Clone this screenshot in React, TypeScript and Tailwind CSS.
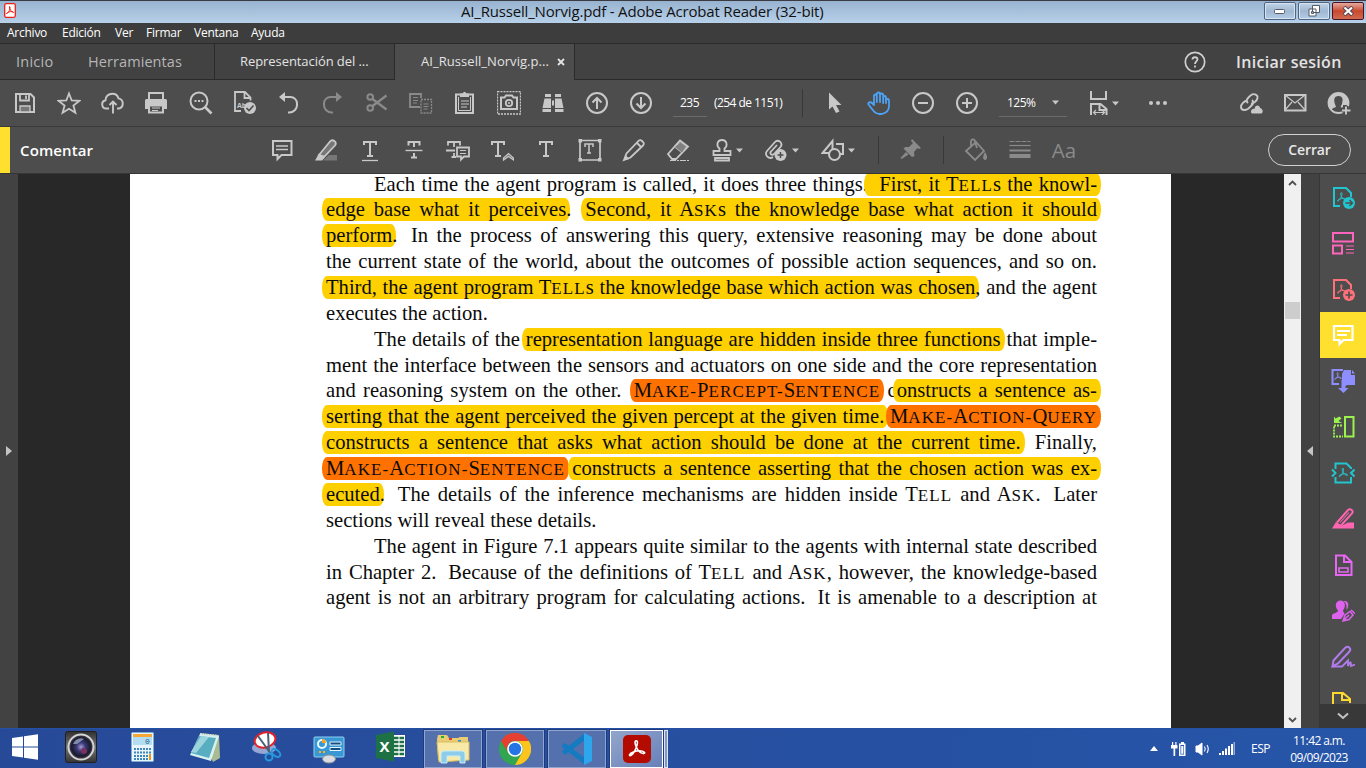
import React from "react";

type P = { children?: React.ReactNode; className?: string; w?: number; h?: number };

/* Outline icon on a 24-unit grid, one unit per pixel */
const I = ({ children, className = "text-[#c8c8c8]", w = 24, h = 24 }: P) => (
  <svg width={w} height={h} viewBox={`0 0 ${w} ${h}`} className={`shrink-0 ${className}`} fill="none" stroke="currentColor" strokeWidth={1.8}>
    {children}
  </svg>
);
const Cell = ({ children }: P) => <div className="flex w-11 shrink-0 items-center justify-center">{children}</div>;
const Caret = () => (
  <svg width="7" height="5" viewBox="0 0 7 5" className="shrink-0 fill-[#c8c8c8]"><path d="M0 .5h7L3.5 4.5z" /></svg>
);
const dim = "text-[#8a8a8a]";
const f = { fill: "currentColor", stroke: "none" };

const Tee = ({ x = 12, y = 4, s = 1 }: { x?: number; y?: number; s?: number }) => (
  <path transform={`translate(${x} ${y}) scale(${s})`} d="M-6 4V1H6V4M0 1V15M-3 15H3" strokeWidth={2} />
);
const Trefoil = ({ t = "", sw = 1.3 }: { t?: string; sw?: number }) => (
  <path transform={t} strokeWidth={sw} strokeLinejoin="round" d="M5 0.8C3.6.6 4 3 5 5C6 7 8 8.8 9.6 8.8C11 8.6 9.5 7 7 7C4.500 7 1 8.2.6 9.6C.6 11 2.700 9.500 4 7C5.200 4.500 6.300 1 5 .8" />
);

const mainIcons: React.ReactNode[] = [
  <I><path d="M3 3H17.500L21 6.500V21H3Z" strokeWidth={2} /><path d="M7 3V9.500H16V3" /><path d="M13 4.500V8" /><path d="M7 15h10v6H7z" fill="#777" strokeWidth={1.3} /></I>,
  <I><path d="M12 2.500L14.700 9.500L22.300 9.900L16.400 14.500L18.400 21.800L12 17.700L5.600 21.800L7.600 14.500L1.700 9.900L9.300 9.500Z" /></I>,
  <I><path d="M8 17.500H5.500A4.200 4.200 0 0 1 4.500 9.200C4.500 5.500 7.500 2.700 11.300 2.700C14.500 2.700 16.800 4.700 17.500 7.400A5.200 5.200 0 0 1 18 17.500H16M12 22.500V11M8.500 14L12 10.500L15.500 14" strokeWidth={1.9} /></I>,
  <I><path d="M4 8V2H18V8" strokeWidth={2} /><path {...f} d="M0 9.500Q0 8 1.500 8H20.500Q22 8 22 9.500V18H18V15H4V18H0Z" /><path d="M4 14.500H18V21.500H4Z" strokeWidth={2} /><path d="M7 17h8M7 19.500h6" strokeWidth={1} /></I>,
  <I><circle cx="10" cy="10" r="8.500" strokeWidth={2} /><path d="M16 16L22.500 22.500" strokeWidth={2.600} /><path {...f} d="M5.500 9h2v2h-2zM9 9h2v2H9zM12.500 9h2v2h-2z" /></I>,
  <I><path d="M8 20H2V1H12L17.500 6.500V9.500M11.500 1V7H17" /><text x="4" y="16.500" fontSize="7" fontFamily="Open Sans" fontWeight="bold" fill="currentColor" stroke="none">Ab</text><circle cx="17" cy="17" r="6" {...f} /><path d="M13.500 17L16 19.500L20.500 14.500" stroke="#4d4d4d" strokeWidth={1.600} /></I>,
  <I><path d="M6 6H13.500A6.500 6.500 0 0 1 20 12.500A8 8 0 0 1 11 21.500" strokeWidth={2} /><path {...f} d="M2 6L8 1V11Z" /></I>,
  <I className={dim}><path d="M17 6H9.500A6.500 6.500 0 0 0 3 12.500A8 8 0 0 0 12 21.500" strokeWidth={2} /><path {...f} d="M21 6L15 1V11Z" /></I>,
  <I className={dim}><circle cx="5.200" cy="6" r="2.800" strokeWidth={2} /><circle cx="5.200" cy="17" r="2.800" strokeWidth={2} /><path d="M7.500 8L21.500 18.500M7.500 15L21.500 4.500" strokeWidth={2.300} /></I>,
  <I className={dim}><path d="M11 16H1V3H12V7" /><path d="M4 6.500h5M4 9.500h5M4 12h4" strokeWidth={1} /><path d="M12 8.500H22.500V22H12Z" strokeDasharray="2 1" strokeWidth={1.300} /><path d="M14.500 13h5M14.500 15.500h5M14.500 18h4" strokeWidth={1} /></I>,
  <I><path d="M3 3.500H20V22H3Z" strokeWidth={2} /><path {...f} d="M7 2.500H9.500Q11.500-1 13.500 2.500H16V6H7Z" /><path d="M5.500 6V19.500H17.500V6" strokeWidth={1} /><path d="M8 10h8M8 13h8M8 16h6" strokeWidth={1.100} /></I>,
  <I><path d="M.5 .5H23.500V23H.5Z" strokeDasharray="2 1" strokeWidth={1.300} /><path d="M4 6.500H7.500L9 4.500H15L16.500 6.500H20V18H4Z" strokeWidth={2} /><circle cx="12" cy="12" r="3.200" /><circle cx="12" cy="12" r="1" {...f} /></I>,
  <I><path {...f} d="M4 3h6v3H4zM14 3h6v3h-6zM3.500 7.500H10V17H1.500ZM14 7.500H20.500L22.500 17H14ZM11 9.500h2v5h-2zM1.500 18H10v3H1.500zM14 18h8.500v3H14z" /></I>,
  <I><circle cx="12" cy="12" r="10" strokeWidth={2} /><path d="M12 18V7M7.500 11.500L12 7L16.500 11.500" strokeWidth={2} /></I>,
  <I><circle cx="12" cy="12" r="10" strokeWidth={2} /><path d="M12 6V17M7.500 12.500L12 17L16.500 12.500" strokeWidth={2} /></I>,
];

const commentIcons: React.ReactNode[] = [
  <I><path d="M3 3H21.500V17H11.500L7.500 21V17H3Z" strokeWidth={2} /><path d="M6 8h12M6 11.500h12" strokeWidth={1.300} /></I>,
  <I><path d="M9 22.500L15 17H23V22.500Z" fill="#777" stroke="none" /><path d="M5 17L16 3.500C18.500 .5 23.500 4 21 7.500L10.500 18.500Z" fill="#777" /><path {...f} d="M1 22.500L5 15.500L11 19.500L8 22.500Z" /></I>,
  <I><Tee y={3} /><path d="M4 22.500H20" strokeWidth={1.300} /></I>,
  <I><path d="M6.500 7.500V4H17.500V7.500M12 4V9M12 15V19.500M9 19.500H15" strokeWidth={2} /><path d="M3.500 12.500H20.500" strokeWidth={1.400} /></I>,
  <I><path d="M2 7.500V4H14V7.500M8 4V9M0 12.500H9M8 15V19M5.500 19H10" /><path d="M11 9.500H23V18.500H18L15 21.500V18.500H11Z" fill="#4d4d4d" /><path d="M14 12.500h6M14 15.500h6" strokeWidth={1} /></I>,
  <I><Tee x={8} y={3} /><path d="M13.500 22V20L18.500 15.500L23.500 20V22L18.500 18.500Z" fill="#777" strokeWidth={1.200} /></I>,
  <I><Tee y={3} /></I>,
  <I><path d="M2 2.500H22V22H2Z" strokeWidth={1.700} /><path {...f} d="M.5 1h3.500v3.500H.5zM20 1h3.500v3.500H20zM.5 20h3.500v3.500H.5zM20 20h3.500v3.500H20z" /><path d="M7 9V6H15V9M11 6V15M9 15H13" strokeWidth={1.500} /></I>,
  <I><path d="M2 22L4.500 15.500L17 2.500Q18.500 1.500 20 3L21.500 4.500Q22.500 6 21 7.500L8.500 19.500Z" /><path d="M15 5L19.500 9.500" /><path {...f} d="M1.500 22.500L3.500 17L7.500 21Z" /></I>,
  <I><path d="M2 16L14 2.500L22 8.500L10 21H6Z" /><path d="M8.500 9L16 15L20.500 8.500L14.500 4Z" fill="#808080" strokeWidth={.8} /><path d="M4 22.500H13M14 22.500H23" strokeDasharray="6 1" strokeWidth={1.200} /></I>,
];

const Stamp = () => <I><path d="M9.500 13V10.500C6 8 7 2 12 2S18 8 14.500 10.500V13H20.500V17H3.500V13ZM5 20H19V22.500H5Z" /></I>;
const AttachPlus = () => <I><path d="M9 19C5 22 0 17 3 13L11 4C14 .5 19.500 5 16.500 9L10 16C8 18 5 15.500 7 13.500L13 7" /><circle cx="16.500" cy="17" r="6" {...f} /><path d="M13.500 17h6M16.500 14v6" stroke="#4d4d4d" strokeWidth={1.500} /></I>;
const Shapes = () => <I><path d="M8 15H1.500L11.500 3V11M15 6H22V16H19" strokeWidth={2} /><circle cx="13.500" cy="16.500" r="5.500" strokeWidth={2} /></I>;

const PdfFile = () => (
  <><path d="M9 21H3V3H15L20 8V12" strokeWidth={2} /><Trefoil t="translate(6 7) scale(.9)" sw={1.100} /></>
);
const side: { c: string; g: React.ReactNode }[] = [
  { c: "text-[#22c5cf]", g: <><PdfFile /><circle cx="18" cy="18" r="6" {...f} /><path d="M14.500 18h7M18.500 15L21.500 18L18.500 21" stroke="#4d4d4d" strokeWidth={1.400} /></> },
  { c: "text-[#ff65bb]", g: <><path d="M2 2H22V10.500H2ZM2 14.500H11V22.500H2Z" strokeWidth={2} /><path d="M15 15h8M15 18.500h8M15 22h8" strokeWidth={1.200} /></> },
  { c: "text-[#ff7178]", g: <><PdfFile /><circle cx="18" cy="18" r="6" {...f} /><path d="M14.500 18h7M18 14.500v7" stroke="#4d4d4d" strokeWidth={1.600} /></> },
  { c: "text-white", g: <><path d="M3 3H21.500V17H12.500L8.500 21V17H3Z" strokeWidth={2.200} /><path d="M6 8h13M6 12h10" strokeWidth={1.800} /></> },
  { c: "text-[#8f8eff]", g: <><path d="M8 15H1.500V1H12" strokeWidth={2} /><Trefoil t="translate(3 3) scale(.75)" sw={1.100} /><path {...f} d="M13 1H20V6H24V16H16L12.500 18V13H11V5Z M21 1L24 4.500H21Z" /><path {...f} d="M10.500 11h4v8h3L12.500 24L7 19h3.500z" /></> },
  { c: "text-[#9bf34f]", g: <><path d="M14 2H22.500V21.500H14Z" strokeWidth={2} /><path d="M11 10.500H3V21.500H12" strokeDasharray="2 1" strokeWidth={1.800} /><path {...f} d="M3 1.500L4.500 3.500L8.500 1.500L10.500 3.500L7.500 6L11 8H3Z" /></> },
  { c: "text-[#22c5cf]", g: <><path d="M4.500 8V2.500H15.500L20 7V8M4.500 16V21.500H20V16M1 8.500L4.500 12L1 15.500M23.500 8.500L20 12L23.500 15.500" strokeWidth={2} /><Trefoil t="translate(7.500 6.500) scale(.9)" sw={1.100} /></> },
  { c: "text-[#ff65b1]", g: <><path d="M6 15.500L17 3C19.500 .8 23 4 21 6.500L10 18.500" strokeWidth={1.900} /><path d="M9 15.500L18 5.500" strokeWidth={1.100} /><path {...f} d="M1 21.500L5 15L11 18.500L17 15.500H23V21.500Z" /></> },
  { c: "text-[#e668f2]", g: <><path d="M5 2.500H14L20.500 9V22H5ZM13 3V9H20" strokeWidth={2} /><path d="M8 15h9v4H8z" strokeWidth={1.600} /></> },
  { c: "text-[#dd63ef]", g: <><path {...f} d="M1 20V16C3 13.500 7 14 7 11.500C3 7 5 1.500 9.500 1.500S15.500 7 12 11.500C12 13 13.500 14 13.500 15L10 20Z" /><path {...f} d="M12.500 2C18 1 18.500 7 15.500 11V7Q15.500 4 12.500 2Z" /><path d="M12 22L14 16L19 12.500L22 16L18 20.500ZM12 22L18 16M20 11L24 14.500" strokeWidth={1.500} /></> },
  { c: "text-[#b07bea]", g: <><path d="M2.500 15.500L14 3C17.500 0 21 4 18 7L7 18.500L1.500 21.500Z" strokeWidth={2} /><path d="M1.500 21.500H11L17 15.500V21C20 15.500 20 16.500 20 21L24 19.500" strokeWidth={1.800} /></> },
  { c: "text-[#fbd92f]", g: <><path d="M13 22H2V2H12L19 8V12M11 2V9H18M12 14H22" strokeWidth={2} /></> },
];

/* Paragraph markup: {highlight}, [orange highlight], *SMALL CAPS*, ~ widens a sentence gap */
const lines: { t: string; indent?: boolean; ragged?: boolean }[] = [
  { t: "Each time the agent program is called, it does three things.{ ~First, it T*ELL*s the knowl-}", indent: true },
  { t: "{edge base what it perceives}. ~{Second, it A*SK*s the knowledge base what action it should}" },
  { t: "{perform}. ~In the process of answering this query, extensive reasoning may be done about" },
  { t: "the current state of the world, about the outcomes of possible action sequences, and so on." },
  { t: "{Third, the agent program T*ELL*s the knowledge base which action was chosen}, and the agent" },
  { t: "executes the action.", ragged: true },
  { t: "The details of the {representation language are hidden inside three functions} that imple-", indent: true },
  { t: "ment the interface between the sensors and actuators on one side and the core representation" },
  { t: "and reasoning system on the other. ~[M*AKE-*P*ERCEPT-*S*ENTENCE*] c{onstructs a sentence as-}" },
  { t: "{serting that the agent perceived the given percept at the given time.} [M*AKE-*A*CTION-*Q*UERY*]" },
  { t: "{constructs a sentence that asks what action should be done at the current time.} ~Finally," },
  { t: "[M*AKE-*A*CTION-*S*ENTENCE*] {constructs a sentence asserting that the chosen action was ex-}" },
  { t: "{ecuted}. ~The details of the inference mechanisms are hidden inside T*ELL* and A*SK*. ~Later" },
  { t: "sections will reveal these details.", ragged: true },
  { t: "The agent in Figure 7.1 appears quite similar to the agents with internal state described", indent: true },
  { t: "in Chapter 2. ~Because of the definitions of T*ELL* and A*SK*, however, the knowledge-based" },
  { t: "agent is not an arbitrary program for calculating actions. ~It is amenable to a description at" },
];
const caps = (s: string) =>
  s.split(/(\*[^*]*\*|~)/).map((p, i) =>
    p === "~" ? <span key={i} className="ml-[5px]" /> :
    p[0] === "*" ? <span key={i} className="text-[17px] tracking-[1.1px]">{p.slice(1, -1)}</span> :
    <React.Fragment key={i}>{p}</React.Fragment>
  );
const rich = (s: string) =>
  s.split(/(\{[^}]*\}|\[[^\]]*\])/).map((p, i) =>
    p[0] === "{" ? <span key={i} className="-mx-1 rounded-[5px/11px] bg-[#ffd000] px-1 pb-px">{caps(p.slice(1, -1))}</span> :
    p[0] === "[" ? <span key={i} className="-mx-1 rounded-[5px/11px] bg-[#ff7200] px-1 pb-px">{caps(p.slice(1, -1))}</span> :
    <React.Fragment key={i}>{caps(p)}</React.Fragment>
  );

const WinBtn = ({ children, red }: { children: React.ReactNode; red?: boolean }) => (
  <div className={`flex h-[18px] w-8 items-center justify-center rounded-[2px] border ${red ? "border-[#4c1325] bg-linear-to-b from-[#e2a99e] via-[#c9482c] to-[#cf6a50]" : "border-[#4e6584] bg-linear-to-b from-[#c2d3e6] via-[#9fb8d2] to-[#b4cce4] shadow-[inset_0_0_0_1px_#d6e3f0]"}`}>
    {children}
  </div>
);

function TitleBar() {
  return (
    <div className="flex h-[23px] shrink-0 items-center border-t border-[#3a3a40] bg-linear-to-b from-[#98b3d0] to-[#b8d1ea] pl-1">
      <svg width="12" height="15" viewBox="0 0 12 15" className="-mt-1 fill-white stroke-[#ed2015]">
        <rect x=".7" y=".7" width="10.600" height="13.600" rx="1.500" strokeWidth="1.300" />
        <path d="M5.500 3.500C5 6 8 9.500 9.500 9.500C9.500 7.500 3 9 2.500 10.500C4 11.500 7 5 5.500 3.500" fill="none" strokeWidth="1" />
      </svg>
      <div className="-mt-0.5 flex-1 pl-[445px] text-[15px] leading-5 whitespace-nowrap text-[#111]"><span className="tracking-[-0.18px]">AI_Russell_Norvig.pdf - Adobe Acrobat Reader (32-bit)</span></div>
      <div className="-mt-0.5 flex gap-0.5 pr-0.5">
        <WinBtn><svg width="12" height="6" className="mt-0.5"><rect x=".5" y=".5" width="10" height="4" rx="1" fill="#fff" stroke="#555b69" /></svg></WinBtn>
        <WinBtn><svg width="13" height="12" viewBox="0 0 13 12"><path d="M4.500.5h7v7h-7zM1 4h7v7H1z" fill="#fff" stroke="#555b69" /><path d="M3.500 6.500h2v2h-2z" fill="#9db5cf" stroke="#555b69" /></svg></WinBtn>
        <WinBtn red><svg width="13" height="10" viewBox="0 0 13 10"><path d="M2 1L10.500 9M10.500 1L2 9" stroke="#514453" strokeWidth="4" /><path d="M2.500 1.500L10 8.500M10 1.500L2.500 8.500" stroke="#fff" strokeWidth="2.200" /></svg></WinBtn>
      </div>
    </div>
  );
}

function MenuBar() {
  return (
    <div className="flex h-[21px] shrink-0 items-center border-b border-[#2a2a2a] bg-[#3d3d3d] pl-[7px] text-[12px] tracking-[-0.25px] text-white">
      <span className="w-[55px]">Archivo</span><span className="w-[53px]">Edición</span><span className="w-[31px]">Ver</span>
      <span className="w-12">Firmar</span><span className="w-[57px]">Ventana</span><span>Ayuda</span>
    </div>
  );
}

function Tabs() {
  return (
    <div className="flex h-9 shrink-0 bg-[#424242] text-[#e3e3e3]">
      <div className="flex w-[215px] items-center border-r border-b border-[#2a2a2a] pl-4 text-[14.5px] text-[#b6b6b6]">
        <span className="w-[72px] tracking-[0.25px]">Inicio</span><span className="tracking-[0.08px]">Herramientas</span>
      </div>
      <div className="flex w-[180px] items-center border-r border-b border-[#2a2a2a] pl-[25px] text-[13px] tracking-[-0.07px]">Representación del ...</div>
      <div className="flex w-[180px] items-center border-r border-[#2a2a2a] bg-[#4d4d4d] pl-[26px] text-[13px]">
        <span className="w-[136px] tracking-[0.05px] whitespace-nowrap">AI_Russell_Norvig.p...</span>
        <svg width="8" height="8" viewBox="0 0 8 8" className="stroke-[#e3e3e3]"><path d="M1 1L7 7M7 1L1 7" strokeWidth="1.800" /></svg>
      </div>
      <div className="flex flex-1 items-center justify-end border-b border-[#2a2a2a] pr-[26px]">
        <svg width="22" height="22" viewBox="0 0 22 22" className="mr-[30px] stroke-[#d0d0d0]" fill="none"><circle cx="11" cy="11" r="9.700" strokeWidth="1.700" /><path d="M8.500 8.500C8.500 5.500 13.500 5.500 13.500 8.500C13.500 10 11 10.500 11 13M11 14.500V16.500" strokeWidth="1.800" /></svg>
        <span className="w-[104px] text-[16px] font-semibold tracking-[0.3px] whitespace-nowrap">Iniciar sesión</span>
      </div>
    </div>
  );
}

function MainToolbar() {
  return (
    <div className="flex h-[47px] shrink-0 items-center border-b border-[#3a3a3a] bg-[#4d4d4d] pl-[3px] text-[12px] text-white">
      {mainIcons.map((n, i) => <Cell key={i}>{n}</Cell>)}
      <div className="ml-2.5 h-7 w-[34px] border-b border-[#6b6b6b] pl-[7px] text-[12px] leading-7 tracking-[-0.5px]">235</div>
      <div className="w-[95px] pl-[7px] tracking-[-0.55px] whitespace-nowrap">(254 de 1151)</div>
      <div className="mr-[10px] h-7 w-px bg-[#383838]" />
      <Cell><I><path {...f} d="M6 1.500L18.500 14H13L16.500 20.500L13 22L9.500 15.500L6 18.500Z" /></I></Cell>
      <Cell><I className="text-[#4da3f5]"><path strokeLinejoin="round" d="M9 22C6 20 3.500 16 1.500 13.500C.5 11.500 3.500 10.500 5 12L7 14V5C7 3 9.800 3 9.800 5V11V3C9.800 1 13 1 13 3V11V4C13 2 16.200 2 16.200 4V12V6.500C16.200 4.500 19 4.500 19 6.500V12V9.500C19 7.500 22 7.500 22 9.500V15C22 19 19 22 15 23H12Z" /></I></Cell>
      <Cell><I><circle cx="12" cy="12" r="10" strokeWidth={2} /><path d="M7 12h10" strokeWidth={2} /></I></Cell>
      <Cell><I><circle cx="12" cy="12" r="10" strokeWidth={2} /><path d="M7 12h10M12 7v10" strokeWidth={2} /></I></Cell>
      <div className="ml-[10px] flex h-7 w-[68px] items-center justify-between border-b border-[#6b6b6b] pr-2 pl-2 tracking-[-0.5px]">125%<Caret /></div>
      <div className="ml-[19px] flex w-[34px] items-center gap-0.5">
        <I><path d="M5 0V8H20V0M5 24V13H14.500L20.500 18V24M13.500 14V19H20" strokeWidth={2} /><path d="M8 21.500H18M10 19L7.500 21.500L10 24M16 19L18.500 21.500L16 24" strokeWidth={1.200} /></I><Caret />
      </div>
      <div className="ml-[29px] flex w-5 gap-[3px]"><i className="size-1 rounded-full bg-[#c8c8c8]" /><i className="size-1 rounded-full bg-[#c8c8c8]" /><i className="size-1 rounded-full bg-[#c8c8c8]" /></div>
      <div className="ml-auto flex pr-[5px]">
        <Cell><I><path d="M9 12C6 9 9 7 11 5C14 1.500 19 3.500 18.500 7C18 10 14 13 12 12.500M13 9C16 12 13 14 11 16C8 20 2 20 2 16C2 13 5 10 8.500 9.500" strokeWidth={1.900} /><path {...f} d="M13 22.500C10.500 21 13 17 15.500 18C16 13 21 14 21 17C24 17.500 24.500 21.500 22.500 22.500Z" /></I></Cell>
        <Cell><I><path d="M2 4H22.500V19.500H2Z" strokeWidth={2} /><path d="M2 4L12 12L22 4M2 19L9 11M22 19L15 11" strokeWidth={1.200} /></I></Cell>
        <Cell><I><circle cx="11.500" cy="12" r="10" /><path {...f} d="M11.500 2A10 10 0 0 0 4 19Q6 16.500 9 16Q6.500 11 7.500 7.500Q8 5 11.500 5T15.500 8Q16 12 13.500 16L16 17V14H21.500V12A10 10 0 0 0 11.500 2Z" /><path d="M19 15v8M15 19h8.500" stroke="#4d4d4d" strokeWidth={5} /><path d="M19 15.500v8M15 19.500h8.500" strokeWidth={1.900} /></I></Cell>
      </div>
    </div>
  );
}

function CommentBar() {
  return (
    <div className="flex h-[47px] shrink-0 items-center border-b border-[#363636] bg-[#4d4d4d]">
      <div className="h-[46px] w-2.5 bg-[#ffe02e]" />
      <div className="w-[250px] pl-2.5 text-[15px] font-semibold tracking-[0.12px] text-white">Comentar</div>
      {commentIcons.map((n, i) => <Cell key={i}>{n}</Cell>)}
      <div className="ml-[10px] flex w-[54px] items-center gap-[2px]"><Stamp /><Caret /></div>
      <div className="flex w-[57px] items-center gap-1"><AttachPlus /><Caret /></div>
      <div className="flex w-[57px] items-center gap-[3px]"><Shapes /><Caret /></div>
      <div className="h-7 w-px bg-[#383838]" />
      <div className="flex w-16 justify-center"><I className={dim}><path {...f} d="M13 1L22 10L20 11L18.500 10L15 14L15.500 18L13 19L4.500 10.500L6.500 9L10 9L14 5L12 3ZM7 14L9.500 16.500L2.500 21L1.500 20Z" /></I></div>
      <div className="mr-[10px] h-7 w-px bg-[#383838]" />
      <Cell><I className={dim}><path d="M2 13L12 4L20 13L11 22ZM7 9V4C7 0 11 1 11 4L13 10" /><path {...f} d="M21 14C18.500 18 18.500 22 21 22S24 18 21 14Z" /></I></Cell>
      <Cell><I className={dim}><path d="M1.500 3.500H22.500" strokeDasharray="5 1" strokeWidth={1.200} /><path d="M1.500 7.500H22.500" strokeWidth={1.200} /><path d="M1.500 12.500H22.500" strokeWidth={2} /><path d="M1.500 18H22.500" strokeWidth={4} /></I></Cell>
      <div className="w-11 text-center text-[20.5px] text-[#8a8a8a]">Aa</div>
      <div className="mr-[15px] ml-auto flex h-8 w-[83px] items-center justify-center rounded-full border border-[#d0d0d0] pb-px text-[14px] font-semibold tracking-[-0.1px] text-[#e8e8e8]">Cerrar</div>
    </div>
  );
}

function Viewer() {
  return (
    <div className="flex h-[554px] shrink-0 bg-[#282828]">
      <div className="flex w-[18px] items-center justify-center bg-[#424242]"><svg width="6" height="10"><path d="M0 0L6 5L0 10z" fill="#c4c4c4" /></svg></div>
      <div className="ml-28 h-full w-[1041px] overflow-hidden bg-white pl-[196px] font-['Liberation_Serif',serif] text-[20.6px] text-[#0b0b0b]">
        <div className="-mt-[2.4px] w-[771px]">
          {lines.map((l, i) => (
            <div key={i} className={`h-[25.87px] leading-[25.87px] whitespace-nowrap ${l.indent ? "pl-12" : ""} ${l.ragged ? "" : "[text-align-last:justify]"}`}>{rich(l.t)}</div>
          ))}
        </div>
      </div>
      <div className="ml-auto flex w-[17px] flex-col items-center bg-[#f0f0f0]">
        <svg width="9" height="6" viewBox="0 0 9 6" className="mt-[6px]" fill="none" stroke="#505050"><path d="M1 5L4.500 1.500L8 5" strokeWidth="1.800" /></svg>
        <div className="mt-[116px] h-[17px] w-[15px] bg-[#cdcdcd]" />
        <svg width="9" height="6" viewBox="0 0 9 6" className="mt-auto mb-[5px]" fill="none" stroke="#505050"><path d="M1 1L4.500 4.500L8 1" strokeWidth="1.800" /></svg>
      </div>
      <div className="flex w-[19px] items-center justify-center border-r border-[#373737] bg-[#424242]"><svg width="6" height="10"><path d="M6 0L0 5L6 10z" fill="#c4c4c4" /></svg></div>
      <div className="flex w-[46px] flex-col bg-[#4d4d4d]">
        <div className="h-[530px] overflow-hidden">
          {side.map((s, i) => (
            <div key={i} className={`flex h-[46px] items-center justify-center ${i === 3 ? "bg-[#ffe02e]" : ""}`}><I className={s.c}>{s.g}</I></div>
          ))}
        </div>
        <div className="flex h-6 items-center justify-center bg-[#383838]"><svg width="14" height="8" viewBox="0 0 14 8" fill="none" stroke="#c4c4c4"><path d="M2 1.500L7 6L12 1.500" strokeWidth="2" /></svg></div>
      </div>
    </div>
  );
}

const TaskBtn = ({ children }: P) => (
  <div className="mr-1 flex h-[38px] w-[58px] items-center justify-center border border-[#8fa5d0] bg-[#5470ad] shadow-[0_0_0_1px_#1f3b7c]">{children}</div>
);

function Taskbar() {
  return (
    <div className="flex h-10 shrink-0 items-center border-t border-[#2450a5] bg-linear-to-r from-[#274a98] to-[#2655a8]">
      <svg width="26" height="26" viewBox="0 0 26 26" className="-mt-1 ml-3" fill="#fff"><path d="M0 4L11 2.500V12.500H0zM12 2.300L26 .3V12.500H12zM0 13.500H11V23.500L0 22zM12 13.500H26V25.700L12 23.700z" /></svg>
      <svg width="32" height="32" viewBox="0 0 32 32" className="-mt-1 ml-[27px]">
        <defs><linearGradient id="cam" x2="0" y2="1"><stop stopColor="#303030" /><stop offset=".5" stopColor="#777" /><stop offset="1" stopColor="#333" /></linearGradient><radialGradient id="lens"><stop stopColor="#a79bd6" /><stop offset=".35" stopColor="#3a3a78" /><stop offset=".75" stopColor="#191a2c" /><stop offset="1" stopColor="#56505c" /></radialGradient></defs>
        <rect x=".5" y=".5" width="31" height="31" rx="2" fill="url(#cam)" stroke="#202020" /><circle cx="16" cy="16" r="12.500" fill="url(#lens)" stroke="#d4d4d4" strokeWidth="2" /><circle cx="19" cy="20" r="3" fill="#7b315d" /><path d="M8 13C10 8 15 6 19 8L12 13Z" fill="#a4b2d2" opacity=".7" />
      </svg>
      <svg width="23" height="30" viewBox="0 0 23 30" className="-mt-1 ml-[34px]"><rect x=".5" y=".5" width="22" height="29" rx="1" fill="#eaf4fb" stroke="#7eaed4" /><path d="M2 2h19v3H2z" fill="#f6a735" /><path d="M2 5h19v8H2z" fill="#b3def2" /><text x="14" y="12" fontSize="8" fontFamily="Liberation Mono" fill="#24578b">0</text><path d="M3 17H20M3 20.500H20M3 24H20M3 27H20" stroke="#3b87be" strokeWidth="2" strokeDasharray="2 1" /><path d="M18 22h2v6h-2z" fill="#f09514" /></svg>
      <svg width="32" height="32" viewBox="0 0 32 32" className="-mt-1 ml-[35px]"><path d="M11 2L30 4L31 27L24 31Z" fill="#a9bb91" /><path d="M11 3L30 5L22 30L1 24Z" fill="#d7f2f1" /><path d="M10 5L27 7L20 27L2 22Z" fill="#58adc0" /><path d="M12 5L20 6L7 22L2 21Z" fill="#9dd5df" /><path d="M11 3L29 5" stroke="#dbe4e7" strokeWidth="2" strokeDasharray="1.500 1" /></svg>
      <svg width="30" height="32" viewBox="0 0 30 32" className="-mt-1 ml-[31px]" fill="none"><ellipse cx="12" cy="17" rx="12" ry="6" fill="#94a7d5" /><ellipse cx="13" cy="9" rx="10.500" ry="7.500" transform="rotate(-15 13 9)" fill="#fff" stroke="#e3222b" strokeWidth="2" /><path d="M6 5L19 23M16 2L17 21" stroke="#4b6076" strokeWidth="2" /><circle cx="17" cy="26" r="3.500" stroke="#2699df" strokeWidth="2" /><ellipse cx="24" cy="22" rx="5" ry="3" transform="rotate(40 24 22)" stroke="#2699df" strokeWidth="2" /></svg>
      <svg width="32" height="30" viewBox="0 0 32 30" className="ml-[31px]"><rect x="1" y="3" width="30" height="20" rx="1" fill="#3998d4" stroke="#90d0f0" /><circle cx="9" cy="10" r="4" fill="none" stroke="#e9fbff" strokeWidth="2" /><path d="M9 9V5Q13 5 13 9Z" fill="#f6a321" /><path d="M17 8h11v3H17zM17 13.500h11v3H17z" fill="#174e83" stroke="#dff5ff" /><path d="M6 17h2v2H6zM10 17h2v2h-2z" fill="#ffb31b" /><ellipse cx="16" cy="25" rx="6.500" ry="4" fill="#d9dce0" stroke="#8b9298" /></svg>
      <svg width="31" height="31" viewBox="0 0 31 31" className="-mt-1 ml-[31px]"><path d="M17 4H29V26H17Z" fill="#fff" /><path d="M17 7H28M17 11H28M17 15H28M17 19H28M17 23H28" stroke="#1d7044" strokeWidth="2.500" /><path d="M23 5V26" stroke="#fff" /><path d="M0 4L18 .5V30.500L0 27Z" fill="#1e7145" /><text x="3.500" y="21" fontSize="15" fontWeight="bold" fontFamily="Open Sans" fill="#fff">X</text></svg>
      <div className="ml-[17px] flex">
        <TaskBtn><svg width="34" height="30" viewBox="0 0 34 30"><path d="M1 5L2 1H11L13 4H22L24 3H32V26H2Z" fill="#e9cd74" /><path d="M5 2h3v2H5z" fill="#24ae39" /><path d="M13 4h3v2h-3z" fill="#df3d25" /><path d="M22 6h3v2h-3z" fill="#238edc" /><path d="M1 8H33V26L3 28Z" fill="#f8e9a7" stroke="#dabd60" /><path d="M5 29V20Q5 17 8 17H26Q29 17 29 20V29H24V22H11V29Z" fill="#8ecde9" stroke="#c6ecfa" /></svg></TaskBtn>
        <TaskBtn><svg width="32" height="32" viewBox="0 0 32 32"><circle cx="16" cy="16" r="16" fill="#31a550" /><path d="M2.100 8A16 16 0 0 1 29.900 8H16A8 8 0 0 0 9 20Z" fill="#e54032" /><path d="M29.900 8A16 16 0 0 1 16 32L23 20A8 8 0 0 0 16 8Z" fill="#fdc51c" /><circle cx="16" cy="16" r="7.800" fill="#fff" /><circle cx="16" cy="16" r="6.200" fill="#2474e4" /></svg></TaskBtn>
        <TaskBtn><svg width="32" height="32" viewBox="0 0 32 32"><path d="M24 7L4 22L1 19V18L23 1Z" fill="#147bc1" /><path d="M24 25L4 10L1 12V14L23 31Z" fill="#147bc1" /><path d="M23 0L31 4V28L23 32Z" fill="#2da6ee" /></svg></TaskBtn>
        <div className="flex h-[38px] w-[53px] items-center justify-center border border-white bg-linear-to-br from-[#93a5cb] to-[#6881b9] shadow-[0_0_0_1px_#1f3b7c]"><svg width="28" height="28" viewBox="0 0 28 28" fill="none" stroke="#fff"><rect width="28" height="28" rx="5" fill="#b30b00" stroke="none" /><Trefoil t="translate(5.500 4.500) scale(1.600)" sw={1} /></svg></div>
        <div className="ml-px h-[38px] w-1 border border-[#dce4f4] bg-[#8297c4]" />
      </div>
      <div className="ml-auto flex items-center text-[12px] tracking-[-0.4px] text-white">
        <svg width="8" height="5" viewBox="0 0 8 5"><path d="M0 5L4 0L8 5z" fill="#fff" /></svg>
        <svg width="16" height="16" viewBox="0 0 16 16" className="ml-[13px]" fill="#fff"><path d="M1 1h1.200v3H1zM4.300 1h1.200v3H4.300zM0 4h6.500v3.500H4.200V15H2.500V7.500H0z" /><path fillRule="evenodd" d="M10 1h3v1.500h1.500V15H8V2.500h2zM9.500 4v9.500H13V4z" /><path d="M10.200 5h2.200v7.800h-2.200z" /></svg>
        <svg width="16" height="14" viewBox="0 0 16 14" className="ml-2" fill="none" stroke="#fff"><path d="M1 4H3L7 1V13L3 10H1Z" fill="#fff" /><path d="M9.500 4.500Q11 7 9.500 9.500M12 3Q14.500 7 12 11" strokeWidth="1.100" /></svg>
        <svg width="17" height="13" viewBox="0 0 17 13" className="ml-2" fill="#fff"><path d="M0 11h2v2H0zM3 9h2v4H3zM6 6.500h2V13H6zM9 4h2v9H9zM12 2h2v11h-2z" /><path d="M14.500 0h1.500v13h-1.500z" opacity=".5" /></svg>
        <span className="ml-[15px] w-[39px] tracking-[-0.5px]">ESP</span>
        <div className="w-[58px] text-center leading-[17px] tracking-[-0.6px] whitespace-nowrap"><div>11:42 a.m.</div><div>09/09/2023</div></div>
        <div className="w-[18px]" />
      </div>
    </div>
  );
}

export default function App() {
  return (
    <div className="flex h-[768px] w-[1366px] flex-col overflow-hidden bg-[#424242] font-['Open_Sans','Noto_Sans',sans-serif]">
      <TitleBar /><MenuBar /><Tabs /><MainToolbar /><CommentBar /><Viewer /><Taskbar />
    </div>
  );
}
